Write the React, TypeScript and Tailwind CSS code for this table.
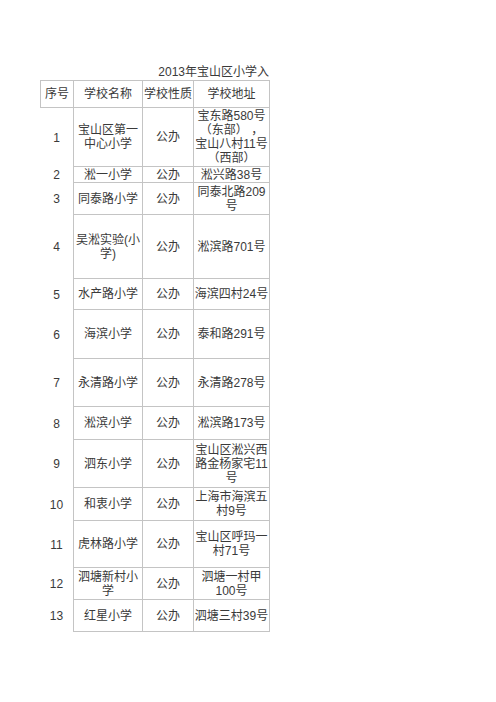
import React from "react";

type Row = { n: string; name: string[]; addr: string[]; h: string };

const rows: Row[] = [
  { n: "1", name: ["宝山区第一", "中心小学"], addr: ["宝东路580号", "（东部） ，", "宝山八村11号", "（西部）"], h: "h-[59px]" },
  { n: "2", name: ["淞一小学"], addr: ["淞兴路38号"], h: "h-[16px]" },
  { n: "3", name: ["同泰路小学"], addr: ["同泰北路209", "号"], h: "h-[32px]" },
  { n: "4", name: ["吴淞实验(小", "学)"], addr: ["淞滨路701号"], h: "h-[64px]" },
  { n: "5", name: ["水产路小学"], addr: ["海滨四村24号"], h: "h-[31px]" },
  { n: "6", name: ["海滨小学"], addr: ["泰和路291号"], h: "h-[49px]" },
  { n: "7", name: ["永清路小学"], addr: ["永清路278号"], h: "h-[48px]" },
  { n: "8", name: ["淞滨小学"], addr: ["淞滨路173号"], h: "h-[33px]" },
  { n: "9", name: ["泗东小学"], addr: ["宝山区淞兴西", "路金杨家宅11", "号"], h: "h-[48px]" },
  { n: "10", name: ["和衷小学"], addr: ["上海市海滨五", "村9号"], h: "h-[33px]" },
  { n: "11", name: ["虎林路小学"], addr: ["宝山区呼玛一", "村71号"], h: "h-[47px]" },
  { n: "12", name: ["泗塘新村小", "学"], addr: ["泗塘一村甲", "100号"], h: "h-[32px]" },
  { n: "13", name: ["红星小学"], addr: ["泗塘三村39号"], h: "h-[32px]" },
];

function Lines({ lines }: { lines: string[] }) {
  return (
    <div className="flex flex-col items-center">
      {lines.map((l, i) => (
        <span key={i} className="whitespace-pre">
          {l}
        </span>
      ))}
    </div>
  );
}

export default function App() {
  return (
    <div
      className="w-[496px] h-[702px] bg-white text-[#3a3a3a] text-[12px] leading-[14px] overflow-hidden"
      style={{ fontFamily: '"Liberation Sans", "Noto Sans CJK SC", sans-serif' }}
    >
      <div className="pt-[65px] pl-[40px] w-[270px]">
        <div className="w-[229px] h-[15px] flex justify-end overflow-hidden">
          <span className="whitespace-nowrap">2013年宝山区小学入</span>
        </div>
        <div className="flex w-[230px] h-[28px] border-t border-[#c4c4c4]">
          <div className="w-[33px] border-l border-b border-[#c4c4c4] flex items-center justify-center">序号</div>
          <div className="w-[69px] border-l border-b border-[#c4c4c4] flex items-center justify-center">学校名称</div>
          <div className="w-[51px] border-l border-b border-[#c4c4c4] flex items-center justify-center">学校性质</div>
          <div className="w-[77px] border-l border-r border-b border-[#c4c4c4] flex items-center justify-center">学校地址</div>
        </div>
        {rows.map((r) => (
          <div key={r.n} className={"flex w-[230px] " + r.h}>
            <div className="w-[33px] flex items-center justify-center">{r.n}</div>
            <div className="w-[69px] border-l border-b border-[#c4c4c4] flex items-center justify-center">
              <Lines lines={r.name} />
            </div>
            <div className="w-[51px] border-l border-b border-[#c4c4c4] flex items-center justify-center">公办</div>
            <div className="w-[77px] border-l border-r border-b border-[#c4c4c4] flex items-center justify-center">
              <Lines lines={r.addr} />
            </div>
          </div>
        ))}
      </div>
    </div>
  );
}
